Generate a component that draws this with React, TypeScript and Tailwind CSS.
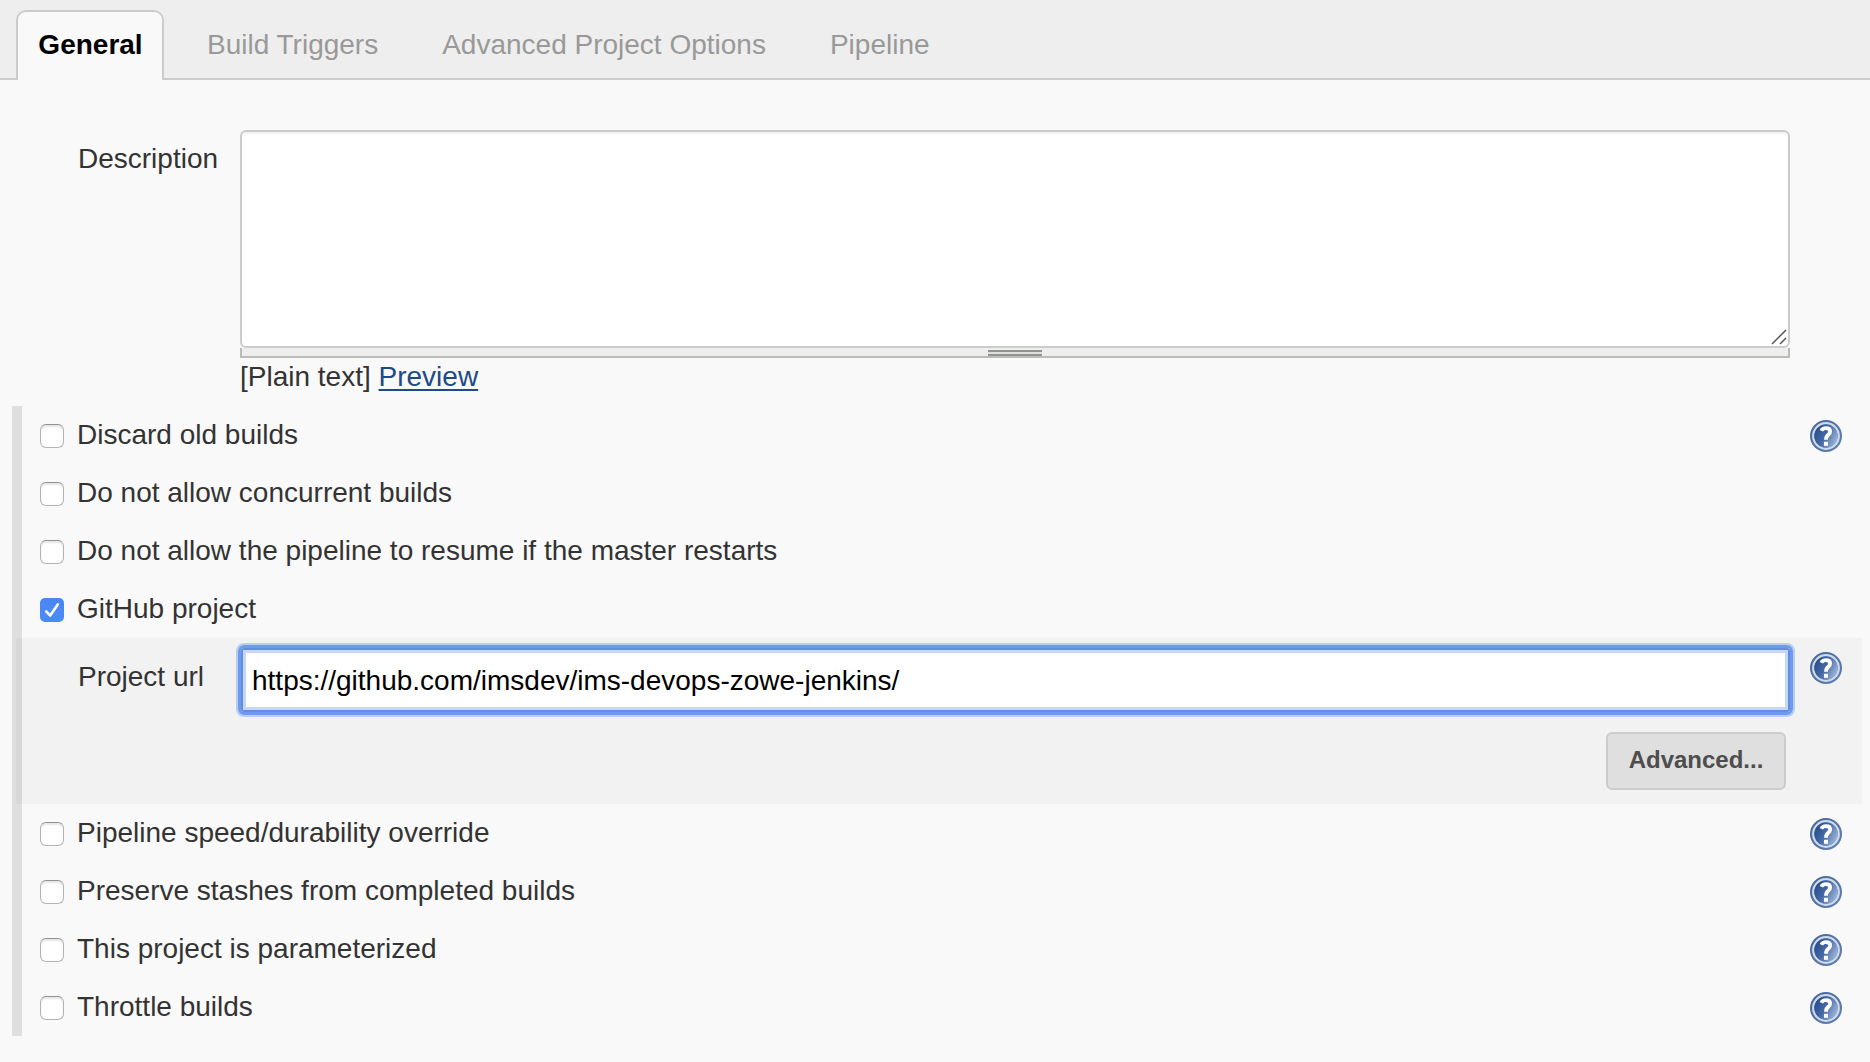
import React from "react";

function HelpIcon() {
  return (
    <svg viewBox="0 0 32 32" className="block h-8 w-8 shrink-0" aria-label="Help">
      <defs>
        <linearGradient id="disc" x1="0" y1="0.25" x2="1" y2="0.75">
          <stop offset="0" stopColor="#264c8c" />
          <stop offset="0.45" stopColor="#4469a5" />
          <stop offset="1" stopColor="#a3bbdc" />
        </linearGradient>
        <linearGradient id="ring" x1="0" y1="0" x2="1" y2="1">
          <stop offset="0" stopColor="#456599" />
          <stop offset="1" stopColor="#6482b3" />
        </linearGradient>
      </defs>
      <circle cx="16" cy="16" r="16" fill="url(#ring)" />
      <circle cx="16" cy="16" r="12.8" fill="none" stroke="#cfdaea" strokeWidth="2.2" />
      <circle cx="16" cy="16" r="11.6" fill="url(#disc)" />
      <path d="M11.4 10.7 Q12.6 8.2 16 8.2 Q20.2 8.2 20.2 11.6 Q20.2 13.6 18 15.1 Q16 16.5 16 19.8" fill="none" stroke="#fff" strokeWidth="3.8" />
      <rect x="14" y="21.8" width="4" height="4" fill="#fff" />
    </svg>
  );
}

function Checkbox({ checked }: { checked?: boolean }) {
  if (checked) {
    return (
      <span className="block h-6 w-6 rounded-[5px] bg-linear-to-b from-[#4a86f5] to-[#4a8af6]">
        <svg viewBox="0 0 24 24" className="block h-6 w-6" fill="none" stroke="#fff" strokeWidth="2.6" strokeLinecap="round" strokeLinejoin="round">
          <path d="M6.2 13.4 L10.2 17.6 L17.8 6.4" />
        </svg>
      </span>
    );
  }
  return (
    <span className="block h-6 w-6 rounded-[6px] border border-[#b4b4b4] border-t-[#929292] bg-white shadow-[inset_0_2px_2px_rgba(0,0,0,0.10)]" />
  );
}

function Option({ label, checked, help }: { label: string; checked?: boolean; help?: boolean }) {
  return (
    <div className="flex h-[58px] items-start pl-[18px] pr-7">
      <div className="pt-[18px]">
        <Checkbox checked={checked} />
      </div>
      <span className="ml-[13px] mt-[13px] flex-1 leading-8">{label}</span>
      {help && (
        <div className="pt-[14px]">
          <HelpIcon />
        </div>
      )}
    </div>
  );
}

export default function App() {
  return (
    <div className="h-[1062px] w-[1870px] overflow-hidden bg-[#f9f9f9] font-['Liberation_Sans',Helvetica,Arial,sans-serif] text-[28px] text-[#333]">
      <nav className="flex h-20 items-end bg-[#eee] leading-8 text-[#999]">
        <div className="h-0.5 w-4 bg-[#ccc]" />
        <div className="h-[70px] w-[148px] rounded-t-[10px] border-2 border-b-0 border-[#ccc] bg-[#f9f9f9] pl-px pt-[17px] text-center font-bold text-black">
          General
        </div>
        <div className="flex h-20 flex-1 gap-16 border-b-2 border-[#ccc] pl-[43px] pt-[29px]">
          <span>Build Triggers</span>
          <span>Advanced Project Options</span>
          <span>Pipeline</span>
        </div>
      </nav>

      <section className="flex h-[326px] pt-[50px]">
        <label className="w-[240px] pl-[78px] pt-[13px] leading-8">Description</label>
        <div className="w-[1550px]">
          <div className="flex h-[218px] items-end justify-end rounded-[6px] border-2 border-[#ccc] bg-white pb-px pr-px shadow-[inset_0_2px_2px_rgba(0,0,0,0.06)]">
            <svg width="16" height="16" viewBox="0 0 16 16" stroke="#555" strokeWidth="1.5">
              <path d="M1 15 L15 1 M9 15 L15 9" />
            </svg>
          </div>
          <div className="flex h-[10px] justify-center border-x-2 border-b-2 border-[#bbbcb6] bg-[#eee] pt-0.5">
            <div className="h-1.5 w-[54px] border-y-2 border-[#8f948c] bg-[#dde1dc]" />
          </div>
          <div className="mt-[3px] leading-8">
            [Plain text] <a className="text-[#204a87] underline decoration-2 underline-offset-[3px]">Preview</a>
          </div>
        </div>
      </section>

      <section className="ml-3 border-l-[10px] border-[#dfdfdf]">
        <Option label="Discard old builds" help />
        <Option label="Do not allow concurrent builds" />
        <Option label="Do not allow the pipeline to resume if the master restarts" />
        <Option label="GitHub project" checked />
        <div className="-ml-1.5 mr-2 h-[166px] bg-black/[0.026]">
          <div className="flex items-start">
            <label className="w-[220px] pl-[62px] pt-[23px] leading-8">Project url</label>
            <div className="mt-[5px] h-[74px] w-[1559px] rounded-[8px] border-2 border-[#b9cdf3]">
              <div className="h-full rounded-[6px] border-[3px] border-[#6f9bee]">
                <div className="h-full rounded-[3px] border-2 border-[#628de0]">
                  <div className="h-full border-[3px] border-[#c6d7f7] bg-white pl-1.5 leading-[55px] text-black">
                    https://github.com/imsdev/ims-devops-zowe-jenkins/
                  </div>
                </div>
              </div>
            </div>
            <div className="ml-[15px] pt-[14px]">
              <HelpIcon />
            </div>
          </div>
          <div className="flex justify-end pr-[76px] pt-[15px]">
            <button className="h-[58px] w-[180px] rounded-[6px] border-2 border-[#ccc] bg-[#dfdfdf] pb-0.5 text-2xl font-bold text-[#4d4d4d]">
              Advanced...
            </button>
          </div>
        </div>
        <Option label="Pipeline speed/durability override" help />
        <Option label="Preserve stashes from completed builds" help />
        <Option label="This project is parameterized" help />
        <Option label="Throttle builds" help />
      </section>
    </div>
  );
}
